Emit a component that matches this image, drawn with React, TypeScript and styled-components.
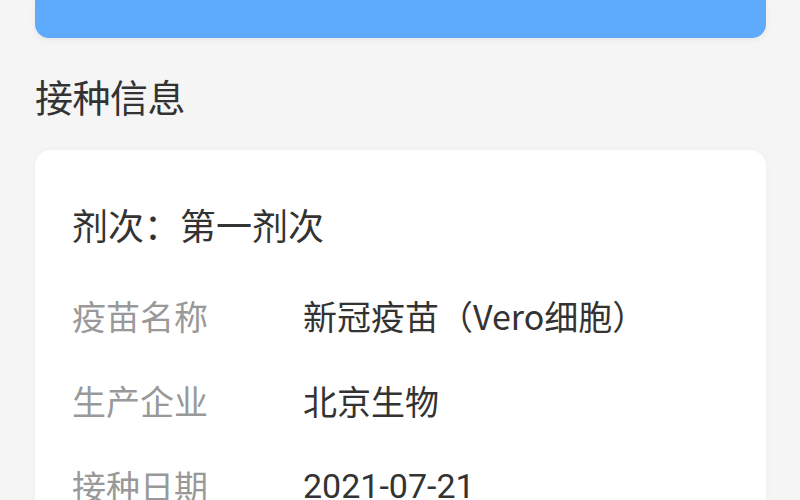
import React from "react";
import styled, { createGlobalStyle } from "styled-components";

const Global = createGlobalStyle`
  html, body { margin: 0; padding: 0; background: #f5f5f5; }
  body { font-family: "Noto Sans CJK SC", "Noto Sans", sans-serif; }
`;

const Page = styled.div`
  padding: 0 34px 0 35px;
  height: 500px;
  overflow: hidden;
  box-sizing: border-box;
`;

const Banner = styled.div`
  height: 38px;
  background: #5eaafc;
  border-radius: 0 0 14px 14px;
  box-shadow: 0 2px 6px rgba(0, 0, 0, 0.06);
`;

const Title = styled.h2`
  margin: 33px 0 30px;
  font-size: 38px;
  line-height: 49px;
  font-weight: 400;
  color: #333;
  letter-spacing: -0.5px;
`;

const Card = styled.div`
  background: #fff;
  border-radius: 16px;
  padding: 44px 37px 40px;
  box-shadow: 0 0 8px rgba(0, 0, 0, 0.03);
`;

const Dose = styled.div`
  font-size: 36px;
  line-height: 60px;
  color: #333;
  margin-bottom: 19px;
`;

const Row = styled.div`
  display: grid;
  grid-template-columns: 231px 1fr;
  height: 85px;
  align-items: center;
  font-size: 34px;
`;

const Label = styled.span`
  color: #999;
`;

const Value = styled.span<{ $latin?: boolean }>`
  color: #333;
  font-family: ${(p) => (p.$latin ? `Roboto, "Noto Sans", sans-serif` : `inherit`)};
`;

const rows: { label: string; value: string; latin?: boolean }[] = [
  { label: "疫苗名称", value: "新冠疫苗（Vero细胞）" },
  { label: "生产企业", value: "北京生物" },
  { label: "接种日期", value: "2021-07-21", latin: true },
];

export default function App() {
  return (
    <>
      <Global />
      <Page>
        <Banner />
        <Title>接种信息</Title>
        <Card>
          <Dose>剂次：第一剂次</Dose>
          {rows.map((r) => (
            <Row key={r.label}>
              <Label>{r.label}</Label>
              <Value $latin={r.latin}>{r.value}</Value>
            </Row>
          ))}
        </Card>
      </Page>
    </>
  );
}
